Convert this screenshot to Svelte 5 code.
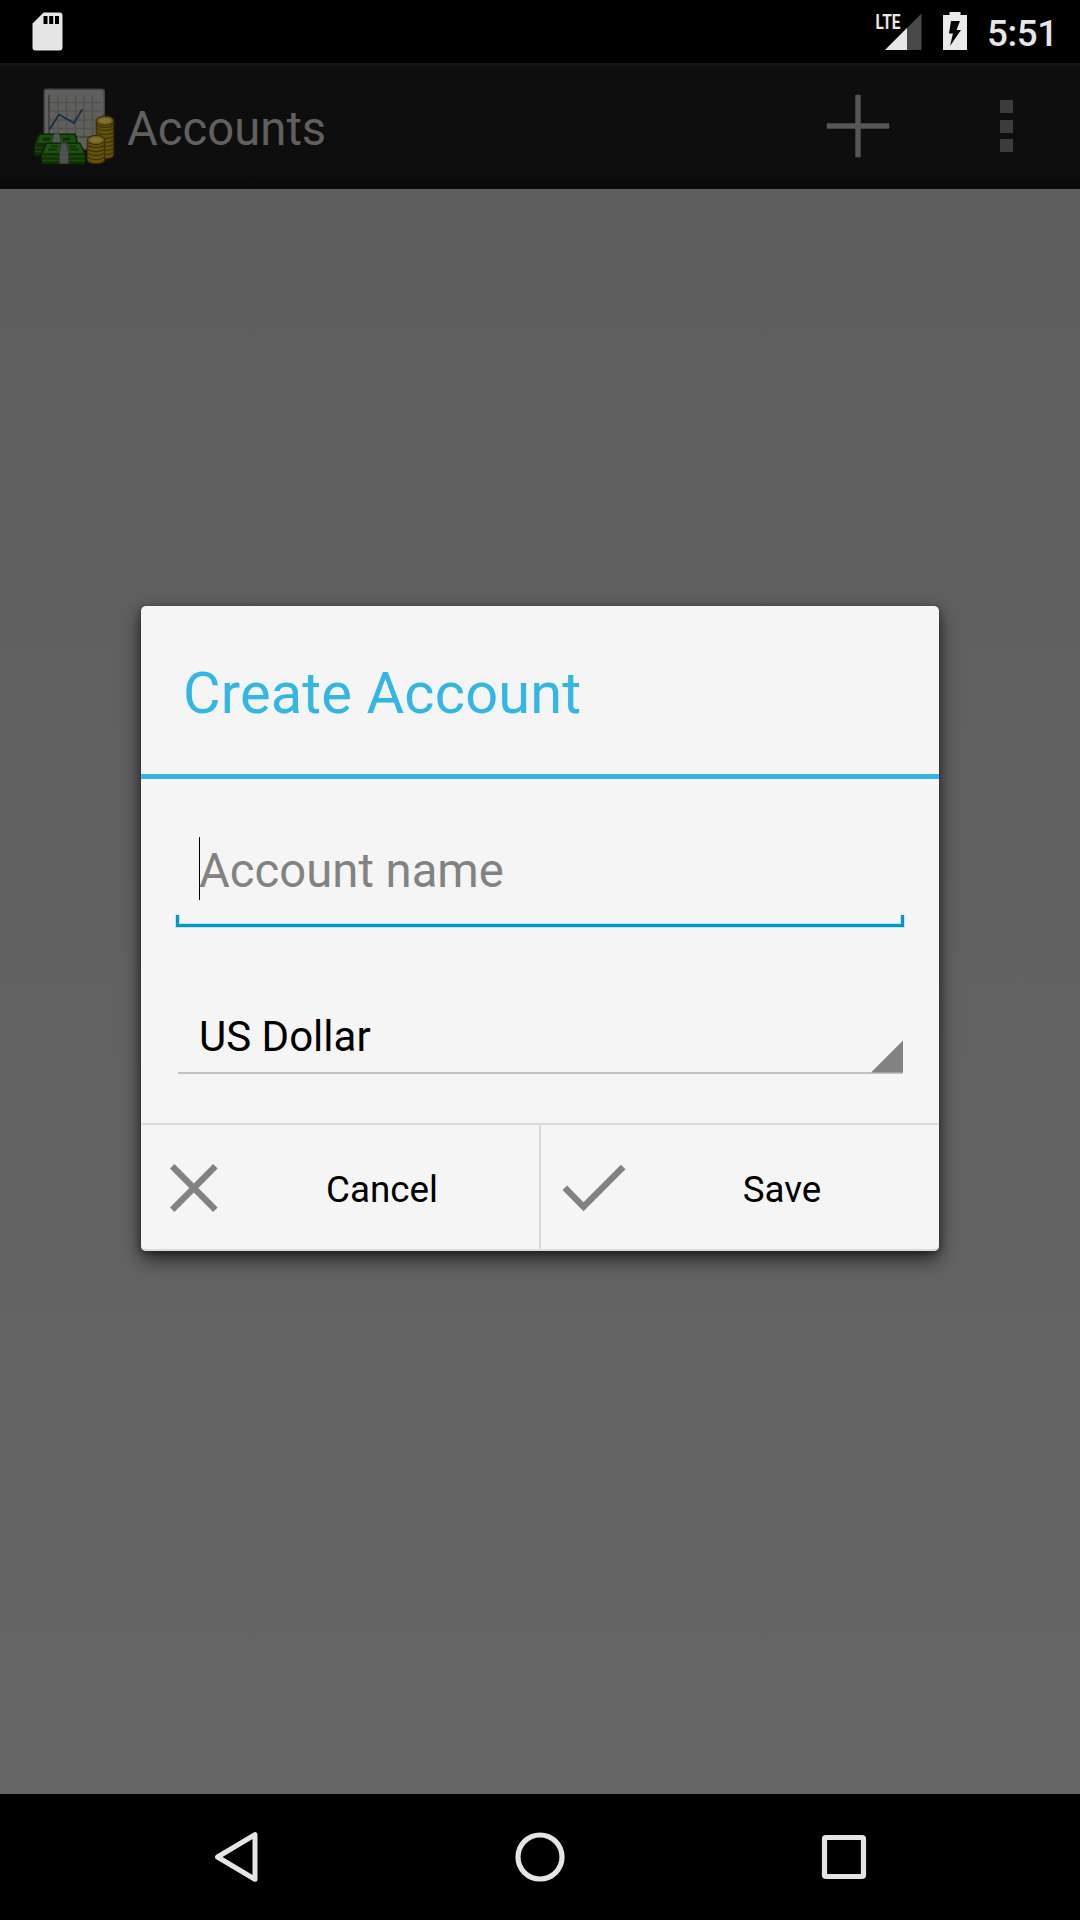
<script>
  const hint = 'Account name';
  const currency = 'US Dollar';
  const coinsBack = [66, 62, 58, 54, 50, 46, 42, 38, 35];
  const coinsFront = [71, 67, 63, 59, 55];
</script>

<div class="screen">
  <header class="status">
    <svg class="sd" width="31" height="39" viewBox="0 0 31 39">
      <path d="M11.5 .5H27.500a3 3 0 0 1 3 3V35.500a3 3 0 0 1-3 3H3.500a3 3 0 0 1-3-3V11.500Z" fill="#e5e5e5" />
      <path d="M11.500 4h4v8h-4zM17.200 4h4v8h-4zM23 4h4v8h-4z" fill="#000" />
    </svg>
    <svg class="signal" width="48" height="40" viewBox="0 0 48 40">
      <path d="M9 38L45.500 1.500V38Z" fill="#484848" />
      <path d="M9 38L31 16V38Z" fill="#e7e7e7" />
      <text class="lte" x="-.5" y="17.300" textLength="25" lengthAdjust="spacingAndGlyphs">LTE</text>
    </svg>
    <svg class="battery" width="24" height="38" viewBox="0 0 24 38">
      <path d="M6.500 0h11v3H24V38H0V3h6.500Z" fill="#e9e9e9" />
      <path d="M8 9h9l-3.500 9h4.500L7 34l3-12.500H6Z" fill="#000" />
    </svg>
    <span class="clock">5:51</span>
  </header>

  <div class="bar">
    <svg class="logo" width="84" height="80" viewBox="0 0 84 80">
      <rect x="11.500" y="2.500" width="61.500" height="61.500" rx="3" fill="#444" />
      <rect x="13" y="4" width="58.500" height="58.500" rx="2" fill="#5f5f5e" />
      <path d="M17 16.500H69M17 25H69M17 34H69M17 42.500H69M26 9V50M34.500 9V50M43.500 9V50M52 9V50M60.500 9V50" stroke="#51514f" stroke-width="1.500" />
      <path d="M17 8.500V51H69" fill="none" stroke="#3f3f3e" stroke-width="1.600" />
      <path d="M17.500 43.500L27 28.500L42 37L50.500 23" fill="none" stroke="#1b2c4a" stroke-width="1.800" />
      <g stroke="#3d2f05" stroke-width="1.100">
        {#each coinsBack as y}
          <path d="M64.300 {y - 1}v3.500c0 5.300 17.400 5.300 17.400 0v-3.500Z" fill="#62520c" />
        {/each}
        <ellipse cx="73" cy="34.700" rx="8.700" ry="4.600" fill="#6c5e14" />
        <ellipse cx="73" cy="34.700" rx="6" ry="2.700" fill="#7b7336" stroke="none" />
        {#each coinsFront as y}
          <path d="M55.300 {y - 1}v3.500c0 5.300 17.400 5.300 17.400 0v-3.500Z" fill="#62520c" />
        {/each}
        <ellipse cx="64" cy="54" rx="8.700" ry="4.600" fill="#6c5e14" />
        <ellipse cx="64" cy="54" rx="6" ry="2.700" fill="#7b7336" stroke="none" />
      </g>
      <path d="M7 48H43.500L46 58.500V69.500H2.500V58.500Z" fill="#0f2c05" stroke="#0b2204" />
      <path d="M8 49H42.500L44.500 57H4.500Z" fill="#1d4c10" />
      <path d="M3 61.500H16M3 65.500H16" stroke="#1d470a" stroke-width="1.500" />
      <path d="M11 53H18M31 53H38" stroke="#0f3006" stroke-width="3" />
      <path d="M22 48h5l2 10h-9Z" fill="#555" />
      <path d="M14 57H48L53 67V78H9.500V67Z" fill="#103005" stroke="#0b2204" />
      <path d="M15 58H47.500L51.500 67H11.500Z" fill="#205313" />
      <path d="M16 63.500H25M38 63.500H47M19 60.500H26M37 60.500H44" stroke="#0f3406" stroke-width="1.800" />
      <path d="M10 70.500H53M10 74.500H53" stroke="#1e4c0a" stroke-width="1.600" />
      <path d="M29 57H34.500L36.500 66V77.500H27.500V66Z" fill="#505050" stroke="#363636" />
    </svg>
    <h1>Accounts</h1>
    <svg class="plus" width="64" height="64" viewBox="0 0 64 64">
      <path d="M.8 32H63.200M32 .8V63.200" stroke="#565656" stroke-width="5.400" />
    </svg>
    <div class="overflow"><i></i><i></i><i></i></div>
  </div>

  <main>
    <section class="dialog">
      <h2>Create Account</h2>
      <div class="form">
        <div class="field">
          <span class="caret"></span><span class="hint">{hint}</span>
        </div>
        <div class="spinner">
          <span>{currency}</span>
          <svg width="32" height="32" viewBox="0 0 32 32"><path d="M0 32.500L32 .5V32.500Z" fill="#828282" /></svg>
        </div>
      </div>
      <div class="actions">
        <div class="action">
          <svg width="64" height="64" viewBox="0 0 64 64"><path d="M10.200 10.200L53.400 53.800M53.400 10.200L10.200 53.800" stroke="#828282" stroke-width="6.400" /></svg>
          <span>Cancel</span>
        </div>
        <div class="action">
          <svg width="64" height="64" viewBox="0 0 64 64"><path d="M2.800 31.800L21.500 50.700L61.200 11" fill="none" stroke="#828282" stroke-width="6.400" /></svg>
          <span>Save</span>
        </div>
      </div>
    </section>
  </main>

  <nav>
    <svg width="50" height="54" viewBox="0 0 50 54"><path d="M6.500 27L44 4.700V49.300Z" fill="none" stroke="#e5e5e5" stroke-width="5" stroke-linejoin="round" /></svg>
    <svg width="50" height="54" viewBox="0 0 50 54"><circle cx="25" cy="27" r="22" fill="none" stroke="#e5e5e5" stroke-width="5.200" /></svg>
    <svg width="50" height="54" viewBox="0 0 50 54"><rect x="5.500" y="7.500" width="39" height="39" rx="1.500" fill="none" stroke="#e5e5e5" stroke-width="5.200" /></svg>
  </nav>
</div>

<style>
  :global(body) { margin: 0; background: #000; }
  .screen {
    width: 1080px;
    height: 1920px;
    display: flex;
    flex-direction: column;
    overflow: hidden;
    font-family: Roboto, sans-serif;
  }
  svg { display: block; flex: none; overflow: visible; }
  .status {
    height: 63px;
    flex: none;
    box-sizing: border-box;
    display: flex;
    align-items: flex-start;
    padding: 12px 20px 0 32px;
    background: #000;
  }
  .signal { margin-left: auto; }
  .lte { font: 700 21px Roboto, sans-serif; fill: #e7e7e7; }
  .battery { margin-left: 19px; }
  .clock {
    margin-left: 20px;
    width: 73px;
    font-size: 36.75px;
    line-height: 43px;
    font-weight: 500;
    letter-spacing: -.4px;
    color: #e6e6e6;
    white-space: nowrap;
  }
  .bar {
    height: 126px;
    flex: none;
    box-sizing: border-box;
    display: flex;
    align-items: flex-start;
    border-top: 3px solid #161616;
    background: linear-gradient(#0e0e0e 0 106px, #090909 123px);
  }
  .logo { margin: 20px 0 0 32px; }
  h1 {
    margin: 35px 0 0 11px;
    font-size: 47.25px;
    line-height: 56px;
    font-weight: 400;
    color: #606060;
  }
  .plus { margin: 28px 0 0 auto; }
  .overflow {
    display: flex;
    flex-direction: column;
    gap: 6.500px;
    margin: 34px 67px 0 110px;
  }
  .overflow i { width: 13px; height: 13px; background: #3c3c3c; }
  main {
    flex: 1;
    display: flex;
    justify-content: center;
    align-items: flex-start;
    background: linear-gradient(#5e5e5e, #666);
  }
  .dialog {
    width: 798px;
    height: 645px;
    margin-top: 417px;
    display: flex;
    flex-direction: column;
    border-radius: 5px;
    background: #f5f5f5;
    box-shadow: 0 8px 20px rgba(0, 0, 0, .65), 0 2px 6px rgba(0, 0, 0, .35), inset 0 -2px 0 #dcdcdc;
  }
  h2 {
    height: 168px;
    flex: none;
    box-sizing: border-box;
    margin: 0;
    padding: 53px 42px 0;
    font-size: 57.75px;
    line-height: 68px;
    font-weight: 400;
    letter-spacing: .15px;
    color: #33b5e5;
  }
  .form {
    height: 349px;
    flex: none;
    box-sizing: border-box;
    padding: 58px 34px 0;
    border-top: 5px solid #33b5e5;
  }
  /* Underline with upturned ends, edged by a faint one-pixel glow. */
  .field {
    width: 730px;
    height: 91px;
    box-sizing: border-box;
    display: flex;
    align-items: flex-start;
    padding-left: 24px;
    background:
      linear-gradient(#0099cc, #0099cc) 1px 87px / 728px 3px no-repeat,
      linear-gradient(#0099cc, #0099cc) 1px 78px / 3px 12px no-repeat,
      linear-gradient(#0099cc, #0099cc) 726px 78px / 3px 12px no-repeat,
      linear-gradient(#c5e2ed, #c5e2ed) 0 86px / 730px 5px no-repeat,
      linear-gradient(#c5e2ed, #c5e2ed) 0 78px / 5px 13px no-repeat,
      linear-gradient(#c5e2ed, #c5e2ed) 725px 78px / 5px 13px no-repeat;
  }
  .caret { width: 1px; height: 63px; margin-right: -1px; background: #000; }
  .hint {
    margin-top: 6px;
    font-size: 47.25px;
    line-height: 56px;
    color: #828282;
  }
  .spinner {
    width: 725px;
    height: 75px;
    margin: 71px 0 0 3px;
    box-sizing: border-box;
    display: flex;
    justify-content: space-between;
    align-items: flex-end;
    border-bottom: 2px solid #c2c2c2;
  }
  .spinner span {
    padding: 0 0 10px 21px;
    font-size: 42px;
    line-height: 50px;
    color: #000;
  }
  .actions {
    flex: 1;
    display: flex;
    border-top: 2px solid #dadada;
  }
  .action {
    flex: 1;
    display: flex;
    align-items: center;
    box-sizing: border-box;
    padding: 0 0 0 21px;
  }
  .action:first-child { border-right: 2px solid #dadada; }
  .action span {
    flex: 1;
    padding: 3px 1px 0 0;
    text-align: center;
    font-size: 36.75px;
    line-height: 44px;
    color: #000;
  }
  nav {
    height: 126px;
    flex: none;
    display: flex;
    align-items: center;
    justify-content: center;
    gap: 254px;
    background: #000;
  }
</style>
